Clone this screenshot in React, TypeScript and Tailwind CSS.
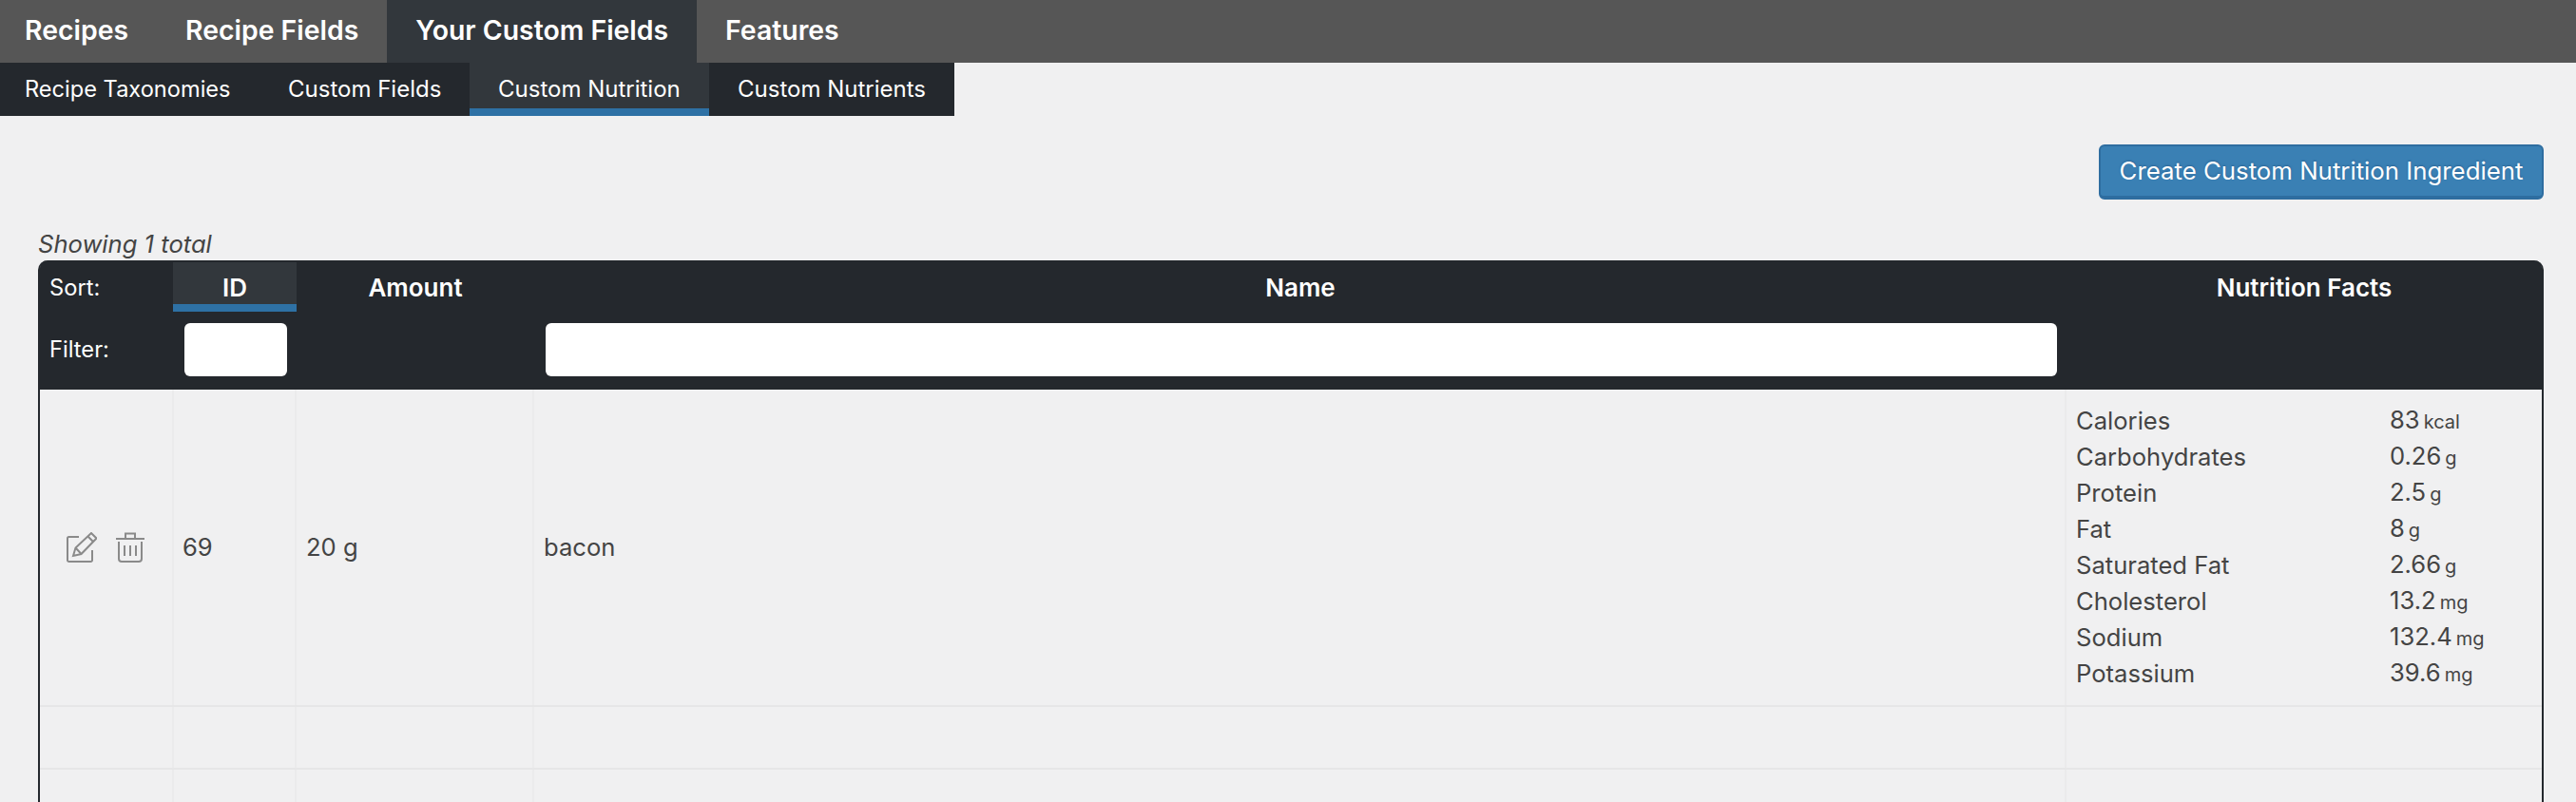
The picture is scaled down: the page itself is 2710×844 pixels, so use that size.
const mainTabs = [
  { label: 'Recipes', className: 'pl-[26px] pr-[30px]' },
  { label: 'Recipe Fields', className: 'px-[30px]' },
  { label: 'Your Custom Fields', className: 'px-[30px] bg-[#32373c]' },
  { label: 'Features', className: 'px-[30px]' },
]

const subTabs = [
  { label: 'Recipe Taxonomies', className: 'w-[273px] pl-[26px] text-[23.6px]' },
  { label: 'Custom Fields', className: 'w-[221px] pl-[30px]' },
  { label: 'Custom Nutrition', className: 'w-[252px] pl-[30px] bg-[#32373c] border-b-[8px] border-[#2e71a5]' },
  { label: 'Custom Nutrients', className: 'w-[258px] pl-[30px]' },
]

const nutrition = [
  { name: 'Calories', amount: '83', unit: 'kcal' },
  { name: 'Carbohydrates', amount: '0.26', unit: 'g' },
  { name: 'Protein', amount: '2.5', unit: 'g' },
  { name: 'Fat', amount: '8', unit: 'g' },
  { name: 'Saturated Fat', amount: '2.66', unit: 'g' },
  { name: 'Cholesterol', amount: '13.2', unit: 'mg' },
  { name: 'Sodium', amount: '132.4', unit: 'mg' },
  { name: 'Potassium', amount: '39.6', unit: 'mg' },
]

const columns = 'grid grid-cols-[141px_129px_250px_1612px_500px]'
const cell = 'border-r-2 border-[#ebebec] last:border-r-0'

function EditIcon() {
  return (
    <svg width="32" height="32" viewBox="0 0 32 32" fill="none" stroke="#8a8a8a" strokeWidth="2">
      <path d="M13 5H2.5A1.5 1.5 0 0 0 1 6.5v23A1.5 1.5 0 0 0 2.5 31h23a1.5 1.5 0 0 0 1.5-1.5V19" />
      <path d="M7 25l2.5-8.5L26 1l5.5 5.5L15.5 23z" />
      <path d="M22.5 4.5l5.5 5.5M9.5 16.5l6 6.5" />
    </svg>
  )
}

function TrashIcon() {
  return (
    <svg width="32" height="32" viewBox="0 0 32 32" fill="none" stroke="#8a8a8a" strokeWidth="2">
      <path d="M1 7h30M11 7V1.5h10V7" />
      <path d="M4 10v18a3 3 0 0 0 3 3h18a3 3 0 0 0 3-3V10" />
      <path d="M10 14v11M16 14v11M22 14v11" />
    </svg>
  )
}

function EmptyRow() {
  return (
    <div className={`${columns} h-[66px] border-b-2 border-[#e6e6e7]`}>
      <div className={cell} />
      <div className={cell} />
      <div className={cell} />
      <div className={cell} />
      <div className={cell} />
    </div>
  )
}

export default function App() {
  return (
    <div className="h-[844px] overflow-hidden bg-[#f0f0f1] font-['Inter','Liberation_Sans',sans-serif] text-[#444]">
      <nav className="flex h-[66px] bg-[#565656] text-[28.4px] leading-[64px] font-semibold whitespace-nowrap text-white">
        {mainTabs.map((tab) => (
          <div key={tab.label} className={tab.className}>
            {tab.label}
          </div>
        ))}
      </nav>
      <nav className="flex h-[56px] w-[1004px] bg-[#24282d] text-[24px] leading-[56px] whitespace-nowrap text-white">
        {subTabs.map((tab) => (
          <div key={tab.label} className={tab.className}>
            {tab.label}
          </div>
        ))}
      </nav>

      <div className="flex justify-end pt-[30px] pr-[34px]">
        <button className="h-[58px] w-[468px] rounded-[6px] border-2 border-b-4 border-[#2e6da0] bg-[#3a80b4] text-[25.8px] text-white [text-shadow:0_-1px_2px_#2a6496]">
          Create Custom Nutrition Ingredient
        </button>
      </div>

      <div className="pr-[34px] pl-[40px]">
        <div className="mt-[30px] h-[34px] text-[25.6px] leading-[34px] italic">Showing 1 total</div>

        <div className="rounded-t-[10px] border-x-2 border-[#24282d]">
          <div className="h-[136px] rounded-t-[8px] bg-[#24282d] text-white">
            <div className={`${columns} h-[54px] text-center text-[26px] leading-[34px] font-semibold`}>
              <div className="pt-[12px] pl-[10px] text-left text-[23.7px] font-normal">Sort:</div>
              <div className="mt-[2px] -ml-px border-b-[8px] border-[#2e71a5] bg-[#32373c] pt-[10px]">ID</div>
              <div className="pt-[12px]">Amount</div>
              <div className="pt-[12px]">Name</div>
              <div className="pt-[12px]">Nutrition Facts</div>
            </div>
            <div className={`${columns} pt-[12px] text-[23.7px]`}>
              <div className="pl-[10px] leading-[56px]">Filter:</div>
              <div className="pr-[10px] pl-[11px]">
                <input className="block h-[56px] w-full rounded-[6px] bg-white" />
              </div>
              <div />
              <div className="pr-[10px] pl-[12px]">
                <input className="block h-[56px] w-full rounded-[6px] bg-white" />
              </div>
              <div />
            </div>
          </div>

          <div className={`${columns} h-[334px] border-b-2 border-[#e6e6e7] text-[25.6px]`}>
            <div className={`${cell} flex items-center gap-[19px] pl-[28px]`}>
              <EditIcon />
              <TrashIcon />
            </div>
            <div className={`${cell} flex items-center pl-[9px]`}>69</div>
            <div className={`${cell} flex items-center pl-[10px]`}>20 g</div>
            <div className={`${cell} flex items-center pl-[10px]`}>bacon</div>
            <div className={`${cell} pt-[14px] pl-[10px]`}>
              {nutrition.map((item) => (
                <div key={item.name} className="flex h-[38px] items-center leading-[38px]">
                  <div className="w-[330px]">{item.name}</div>
                  <div>
                    {item.amount}
                    <span className="ml-[4px] text-[20px]">{item.unit}</span>
                  </div>
                </div>
              ))}
            </div>
          </div>
          <EmptyRow />
          <EmptyRow />
        </div>
      </div>
    </div>
  )
}
